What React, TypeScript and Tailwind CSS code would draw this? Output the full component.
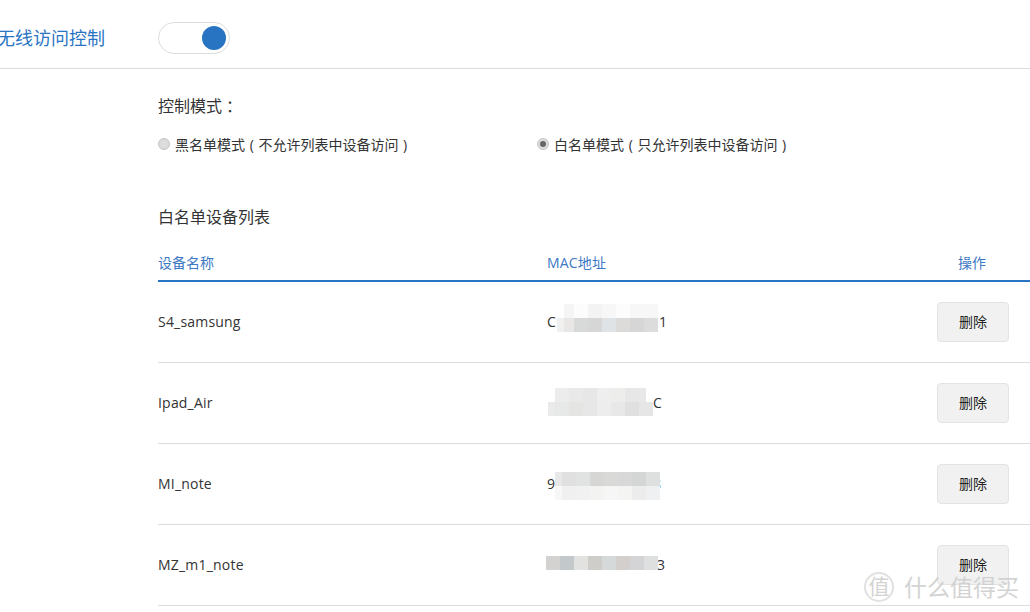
import React from "react";

type Band = { left: number; top: number; cells: [number, string][] };

const devices: { name: string; head: string; tail: string; tailLeft: number; bands: Band[] }[] = [
  {
    name: "S4_samsung",
    head: "C",
    tail: "1",
    tailLeft: 112,
    bands: [
      { left: 17, top: 22, cells: [[10, "#f5f5f5"], [14, "#fcfcfc"], [14, "#f3f3f3"], [14, "#f7f7f7"], [14, "#fcfcfc"], [14, "#f7f7f7"], [14, "#f7f7f7"]] },
      { left: 10, top: 36, cells: [[7, "#f0f0f0"], [10, "#e8e7e6"], [14, "#d8d9d9"], [14, "#d6d6d7"], [14, "#e0e3e5"], [14, "#dcdbd9"], [14, "#d6d6d6"], [14, "#dcdcdc"]] },
    ],
  },
  {
    name: "Ipad_Air",
    head: "",
    tail: "C",
    tailLeft: 106,
    bands: [
      { left: 8, top: 25, cells: [[14, "#ececec"], [14, "#e9e9e9"], [14, "#e7e7e7"], [14, "#eeeeee"], [14, "#ededec"], [14, "#e7e7e7"], [7, "#e8e8e8"]] },
      { left: 1, top: 39, cells: [[7, "#eaeaea"], [14, "#e7e8e8"], [14, "#e5e5e4"], [14, "#e7e7e7"], [14, "#ededed"], [14, "#e8e8e8"], [14, "#e0e0e0"], [14, "#e6e6e6"]] },
    ],
  },
  {
    name: "MI_note",
    head: "9",
    tail: "8",
    tailLeft: 106,
    bands: [
      { left: 8, top: 28, cells: [[7, "#e8e8e8"], [14, "#e1e0e0"], [14, "#e1e3e3"], [14, "#d6d6d5"], [14, "#d9d9d8"], [14, "#d8d8d8"], [14, "#d4d5d5"], [14, "#dee0e0"]] },
      { left: 8, top: 42, cells: [[7, "#f7f7f7"], [14, "#f0f0f0"], [14, "#f1f1f1"], [14, "#f3f3f2"], [14, "#f6f6f6"], [14, "#f4f4f2"], [14, "#ececec"], [14, "#eff0f2"]] },
    ],
  },
  {
    name: "MZ_m1_note",
    head: "",
    tail: "3",
    tailLeft: 110,
    bands: [
      { left: -1, top: 31, cells: [[14, "#d3d2d0"], [14, "#c3c8cb"], [14, "#e2e2e1"], [14, "#cfcdca"], [14, "#d5d9da"], [14, "#d2cfcd"], [14, "#d4d4d6"], [14, "#dee0df"]] },
    ],
  },
];

function Mosaic({ bands }: { bands: Band[] }) {
  return (
    <>
      {bands.map((b) => (
        <div key={b.top} className="absolute flex h-[14px]" style={{ left: b.left, top: b.top }}>
          {b.cells.map(([w, c], i) => (
            <div key={i} className="h-full" style={{ width: w, backgroundColor: c }} />
          ))}
        </div>
      ))}
    </>
  );
}

function Radio({ checked, label }: { checked?: boolean; label: string }) {
  return (
    <div className="flex h-[24px] items-center gap-[5px] leading-[24px]">
      <span className="mt-[-2px] flex h-[12px] w-[12px] items-center justify-center rounded-full border border-[#c4c4c4] bg-[#dcdcdc]">
        {checked && <span className="h-[6px] w-[6px] rounded-full bg-[#666666]" />}
      </span>
      <span className="mt-[-1px] [word-spacing:1px]">{label}</span>
    </div>
  );
}

export default function App() {
  return (
    <div
      className="relative h-[612px] w-[1030px] overflow-hidden bg-white text-[14px] text-[#333333]"
      style={{ fontFamily: '"Open Sans","Noto Sans CJK SC",sans-serif' }}
    >
      <header className="flex h-[69px] items-center border-b border-[#dcdcdc] pt-[8px]">
        <h1 className="ml-[-3px] w-[161px] text-[18px] font-normal text-[#2a75c3]">无线访问控制</h1>
        <div className="flex h-[32px] w-[72px] items-center justify-end rounded-full border border-[#dddddd] bg-white pr-[3px]">
          <span className="h-[24px] w-[24px] rounded-full bg-[#2873c2]" />
        </div>
      </header>

      <main className="pl-[158px]">
        <p className="mt-[25px] text-[16px] leading-[24px]">
          控制模式<span className="ml-[4px]">：</span>
        </p>
        <div className="mt-[15px] flex h-[24px]">
          <div className="w-[379px]">
            <Radio label="黑名单模式 ( 不允许列表中设备访问 )" />
          </div>
          <Radio checked label="白名单模式 ( 只允许列表中设备访问 )" />
        </div>
        <h2 className="mt-[48px] text-[16px] font-normal leading-[24px]">白名单设备列表</h2>

        <div className="mt-[18px] flex h-[35px] items-center border-b-2 border-[#2873c2] pb-[2px] text-[#3d78c4]">
          <div className="w-[389px]">设备名称</div>
          <div className="flex-1 tracking-[0.2px]">MAC地址</div>
          <div className="mr-[22px] w-[72px] text-center">操作</div>
        </div>

        {devices.map((d) => (
          <div key={d.name} className="flex h-[81px] items-center border-b border-[#dcdcdc]">
            <div className="mt-[-2px] w-[389px] tracking-[0.2px]">{d.name}</div>
            <div className="relative h-full flex-1">
              <span className="absolute top-[29px] left-0 leading-[22px]">{d.head}</span>
              <span className="absolute top-[29px] leading-[22px]" style={{ left: d.tailLeft }}>{d.tail}</span>
              <Mosaic bands={d.bands} />
            </div>
            <button className="mr-[21px] h-[40px] w-[72px] rounded-[4px] border border-[#e3e3e3] bg-[#f1f1f1] pb-[2px] text-[14px] text-[#222222]">
              删除
            </button>
          </div>
        ))}
      </main>

      <div className="absolute left-[864px] top-[572px] flex items-center gap-[10px] text-[#cfcfcf] opacity-90">
        <span className="flex h-[30px] w-[30px] items-center justify-center rounded-full border-2 border-[#dedede] text-[21px]">值</span>
        <span className="text-[23px] leading-[30px]">什么值得买</span>
      </div>
    </div>
  );
}
